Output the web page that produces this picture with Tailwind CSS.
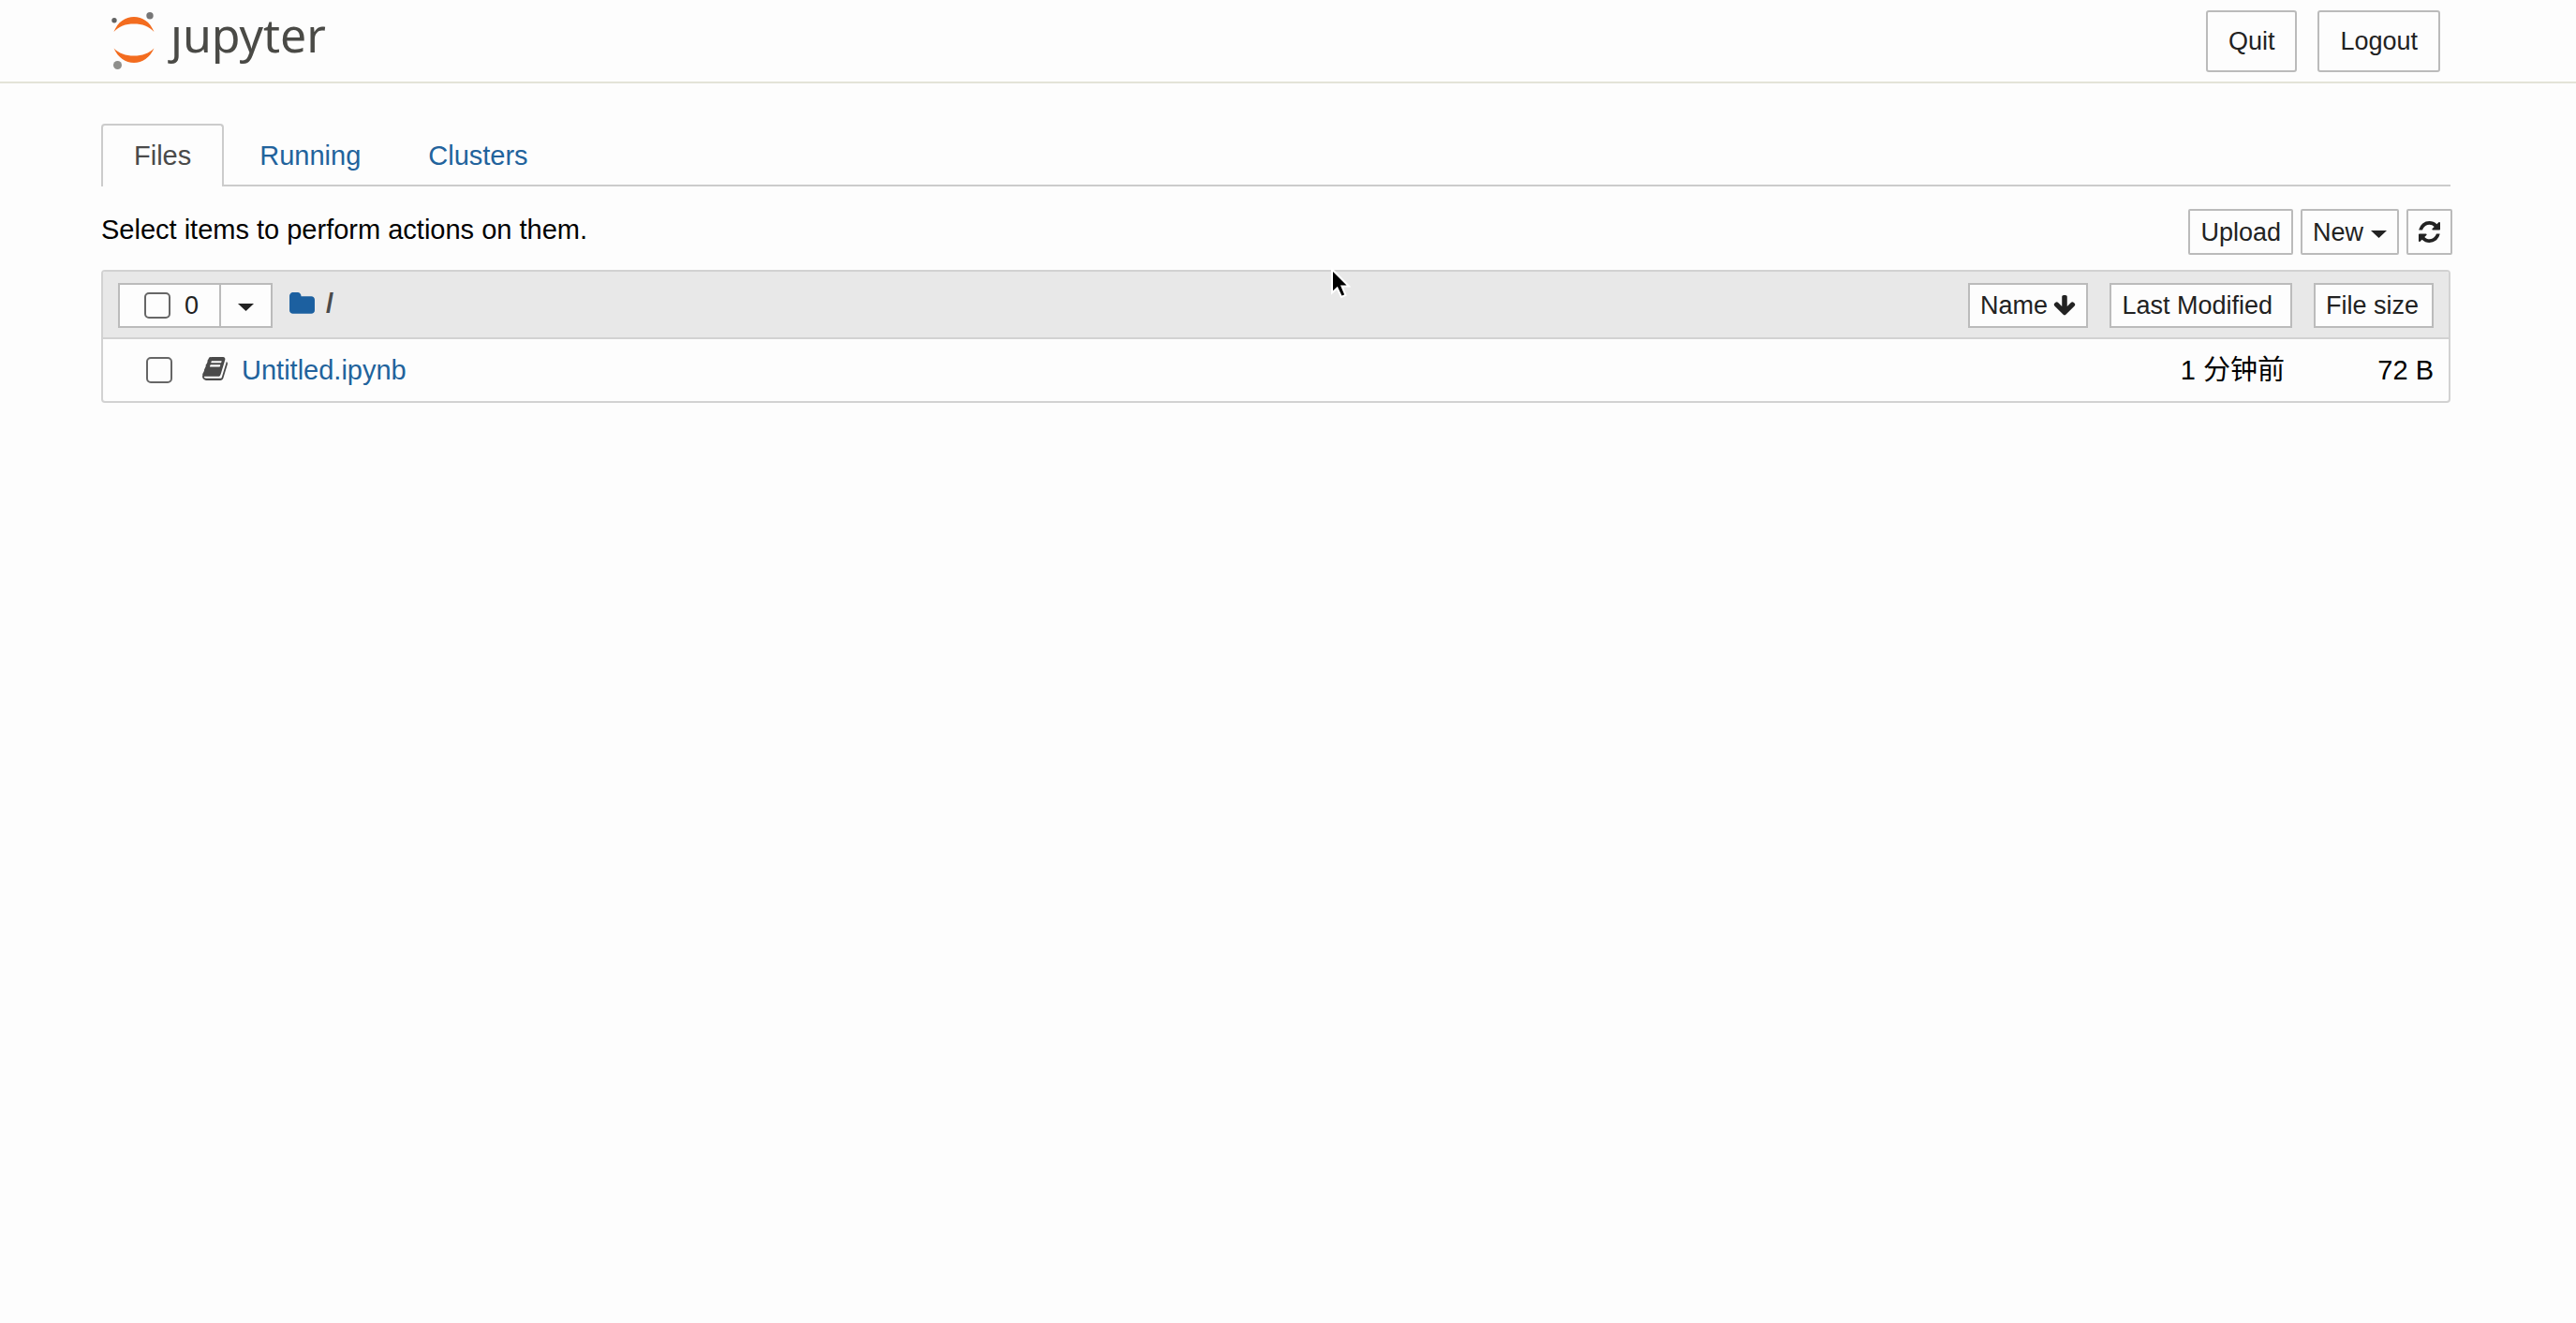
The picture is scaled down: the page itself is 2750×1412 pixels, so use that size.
<!DOCTYPE html>
<html lang="zh-CN">
<head>
  <meta charset="UTF-8">
  <meta name="viewport" content="width=device-width, initial-scale=1.0">
  <title>Home Page - Select or create a notebook</title>
  <script src="https://cdn.jsdelivr.net/npm/@tailwindcss/browser@4"></script>
</head>
<body class="relative min-h-screen bg-[#fdfdfd] text-black text-[29px] leading-[40px] font-['Liberation_Sans','Noto_Sans_CJK_SC',sans-serif]">

  <!-- Header -->
  <header class="flex items-start justify-between h-[89px] pl-[118px] pr-[145px] border-b-2 border-[#e3e3d8]">
    <a href="#" class="flex items-start gap-4 pt-3" aria-label="Jupyter">
      <svg class="w-[48px] h-[62px]" viewBox="0 0 48 62">
        <path fill="#f36c1f" d="M3.500 22C8 11 16 6 25 6S42 11 46.500 22C41 16 34 13.500 25 13.500S9 16 3.500 22z"/>
        <path fill="#f36c1f" d="M3.500 39.500C8 49.500 16 55 25 55S42 49.500 46.500 39.500C41 45 34 47.500 25 47.500S9 45 3.500 39.500z"/>
        <circle cx="42" cy="4.800" r="3.700" fill="#767677"/>
        <circle cx="4" cy="9.800" r="2.700" fill="#616262"/>
        <circle cx="7.500" cy="57.500" r="4.500" fill="#8f8f8c"/>
      </svg>
      <span class="text-[50px] leading-[50px] text-[#4a4a46] font-['Noto_Sans',sans-serif]">ȷupyter</span>
    </a>
    <div class="flex gap-[22px] pt-[11px] text-[27px] text-[#222]">
      <button class="h-[66px] px-[22px] border-2 border-[#bbb] rounded-[3px] bg-[#fdfdfd]">Quit</button>
      <button class="h-[66px] px-[22px] border-2 border-[#bbb] rounded-[3px] bg-[#fdfdfd]">Logout</button>
    </div>
  </header>

  <main class="pl-[108px] pr-[134px] pt-[43px]">
    <!-- Tabs -->
    <nav class="flex gap-1 border-b-2 border-[#ccc]">
      <a href="#files" class="-mb-[2px] h-[67px] px-[33px] pt-3 border-2 border-b-0 border-[#ccc] rounded-t-[4px] bg-[#fdfdfd] text-[#4a4a4a]">Files</a>
      <a href="#running" class="h-[65px] px-[34px] pt-[14px] text-[#22639c]">Running</a>
      <a href="#clusters" class="h-[65px] px-[34px] pt-[14px] text-[#22639c]">Clusters</a>
    </nav>

    <!-- Toolbar -->
    <div class="flex items-start justify-between pt-6 -mr-[2px]">
      <p class="pt-[2px]">Select items to perform actions on them.</p>
      <div class="flex gap-2 text-[27px] text-[#222]">
        <button class="h-[49px] px-[11px] border-2 border-[#bbb] rounded-[2px] bg-[#fdfdfd]">Upload</button>
        <button class="flex items-center gap-2 h-[49px] px-[11px] border-2 border-[#bbb] rounded-[2px] bg-[#fdfdfd]">
          New
          <svg class="mt-1 w-[17px] h-2" viewBox="0 0 16 8" preserveAspectRatio="none"><path fill="#222" d="M0 0h16L8 8z"/></svg>
        </button>
        <button class="flex items-center h-[49px] px-[11px] border-2 border-[#bbb] rounded-[2px] bg-[#fdfdfd]" aria-label="Refresh">
          <svg class="w-[23px] h-[27px]" viewBox="128 0 1536 1792"><path fill="#222" d="M1639 1056q0 5-1 7-64 268-268 434.500t-478 166.500q-146 0-282.500-55t-243.500-157l-129 129q-19 19-45 19t-45-19-19-45v-448q0-26 19-45t45-19h448q26 0 45 19t19 45-19 45l-137 137q71 66 161 102t187 36q134 0 250-65t186-179q11-17 53-117 8-23 30-23h192q13 0 22.500 9.500t9.500 22.500zm25-800v448q0 26-19 45t-45 19h-448q-26 0-45-19t-19-45 19-45l138-138q-148-137-349-137-134 0-250 65t-186 179q-11 17-53 117-8 23-30 23h-199q-13 0-22.500-9.500t-9.500-22.500v-7q65-268 270-434.500t480-166.500q146 0 284 55.500t245 156.500l130-129q19-19 45-19t45 19 19 45z"/></svg>
        </button>
      </div>
    </div>

    <!-- File list -->
    <div class="mt-4 border-2 border-[#d2d2d2] rounded-[4px] overflow-hidden">
      <table class="w-full">
        <thead class="bg-[#e8e8e8] text-[27px] text-[#222]">
          <tr class="h-[71px] border-b-2 border-[#d2d2d2]">
            <th class="p-0 pl-4 pt-[2px] font-normal">
              <div class="flex items-center">
                <div class="flex">
                  <label class="flex items-center gap-[15px] h-[48px] w-[110px] pl-[26px] border-2 border-[#bbb] bg-[#fdfdfd]">
                    <input type="checkbox" class="appearance-none w-7 h-7 border-2 border-[#666] rounded-[5px] bg-[#fdfdfd]">
                    0
                  </label>
                  <button class="flex items-center justify-center -ml-[2px] h-[48px] w-[57px] border-2 border-[#bbb] bg-[#fdfdfd]" aria-label="Select menu">
                    <svg class="mt-1 w-[17px] h-2" viewBox="0 0 16 8" preserveAspectRatio="none"><path fill="#222" d="M0 0h16L8 8z"/></svg>
                  </button>
                </div>
                <a href="#" class="ml-[17px] pb-1" aria-label="Home folder">
                  <svg class="w-[29px] h-[29px]" viewBox="0 0 1792 1792"><path fill="#1c60a0" d="M1728 608v704q0 92-66 158t-158 66h-1216q-92 0-158-66t-66-158v-960q0-92 66-158t158-66h320q92 0 158 66t66 158v32h672q92 0 158 66t66 158z"/></svg>
                </a>
                <span class="ml-[11px] pb-1 text-[29px] font-bold text-[#4a4a4a]">/</span>
                <button class="flex items-center gap-[6px] ml-auto h-[48px] px-[11px] border-2 border-[#bbb] bg-[#fdfdfd]">
                  Name
                  <svg class="w-6 h-[26px]" viewBox="64 0 1664 1792"><path fill="#222" d="M1675 832q0 53-37 90l-651 652q-39 37-91 37-53 0-90-37l-651-652q-38-36-38-90 0-53 38-91l74-75q39-37 91-37 53 0 90 37l294 294v-704q0-52 38-90t90-38h128q52 0 90 38t38 90v704l294-294q37-37 90-37 52 0 91 37l75 75q37 39 37 91z"/></svg>
                </button>
              </div>
            </th>
            <th class="w-[218px] p-0 pt-[2px] font-normal text-right">
              <button class="h-[48px] pl-[11px] pr-[19px] border-2 border-[#bbb] bg-[#fdfdfd]">Last Modified</button>
            </th>
            <th class="w-[167px] p-0 pt-[2px] pr-4 font-normal text-right">
              <button class="h-[48px] pl-[11px] pr-[14px] border-2 border-[#bbb] bg-[#fdfdfd]">File size</button>
            </th>
          </tr>
        </thead>
        <tbody>
          <tr class="h-[67px]">
            <td class="p-0 pl-[46px]">
              <div class="flex items-center">
                <input type="checkbox" class="appearance-none w-7 h-7 border-2 border-[#666] rounded-[5px] bg-[#fdfdfd]" aria-label="Untitled.ipynb">
                <svg class="ml-[31px] mb-1 w-[29px] h-[29px]" viewBox="0 0 1792 1792"><path fill="#4a4a4a" d="M1703 478q40 57 18 129l-275 906q-19 64-76.500 107.500t-122.500 43.500h-923q-77 0-148.500-53.500t-99.500-131.500q-24-67-2-127 0-4 3-27t4-37q1-8-3-21.500t-3-19.500q2-11 8-21t16.500-23.500 16.500-23.500q23-38 45-91.500t30-91.500q3-10 .5-30t-.5-28q3-11 17-28t17-23q21-36 42-92t25-90q1-9-2.500-32t.5-28q4-13 22-30.500t22-22.500q19-26 42.500-84.500t27.500-96.500q1-8-3-25.500t-2-26.500q2-8 9-18t18-23 17-21q8-12 16.500-30.500t15-35 16-36 19.500-32 26.500-23.500 36-11.500 47.500 5.500l-1 3q38-9 51-9h761q74 0 114 56t18 130l-274 906q-36 119-71.500 153.500t-128.500 34.500h-869q-27 0-38 15-11 16-1 43 24 70 144 70h923q29 0 56-15.500t35-41.500l300-987q7-22 5-57 38 15 59 43zm-1064 2q-4 13 2 22.500t20 9.500h608q13 0 25.500-9.500t16.500-22.500l21-64q4-13-2-22.500t-20-9.500h-608q-13 0-25.500 9.500t-16.500 22.500zm-83 256q-4 13 2 22.500t20 9.500h608q13 0 25.500-9.500t16.500-22.500l21-64q4-13-2-22.500t-20-9.500h-608q-13 0-25.500 9.500t-16.500 22.500z"/></svg>
                <a href="#" class="ml-[14px] text-[#22639c]">Untitled.ipynb</a>
              </div>
            </td>
            <td class="p-0 pr-2 text-right">1 分钟前</td>
            <td class="p-0 pr-4 text-right">72 B</td>
          </tr>
        </tbody>
      </table>
    </div>
  </main>

  <!-- Mouse pointer -->
  <svg class="absolute left-[1420px] top-[285px] w-[22px] h-[34px] pointer-events-none" viewBox="0 0 22 34">
    <path fill="#000" stroke="#fff" stroke-width="2" d="M2 2.500V27.500l5.500-5 4.500 9.500 4.500-2-4-9.500h7.500z"/>
  </svg>
</body>
</html>
